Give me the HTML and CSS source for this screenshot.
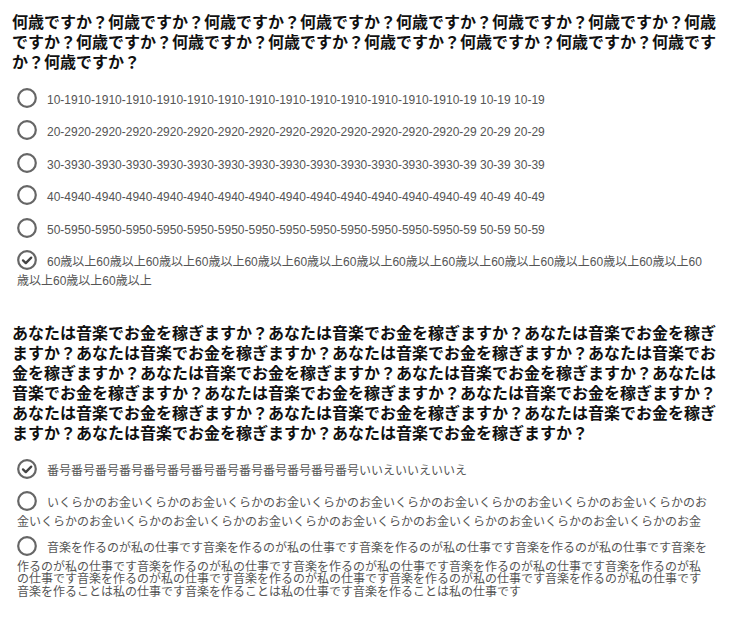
FILE: index.html
```html
<!DOCTYPE html>
<html lang="ja">
<head>
<meta charset="utf-8">
<title>アンケート</title>
<link rel="stylesheet" href="styles.css">
</head>
<body>
<div class="survey">
  <section class="question">
    <h2 class="q-title">何歳ですか？何歳ですか？何歳ですか？何歳ですか？何歳ですか？何歳ですか？何歳ですか？何歳ですか？何歳ですか？何歳ですか？何歳ですか？何歳ですか？何歳ですか？何歳ですか？何歳ですか？何歳ですか？</h2>
    <div class="options">
      <label class="option"><svg class="radio" viewBox="0 0 20 20"><circle cx="10" cy="10" r="8.8"/></svg><span class="opt-text">10-1910-1910-1910-1910-1910-1910-1910-1910-1910-1910-1910-1910-1910-19 10-19 10-19</span></label>
      <label class="option"><svg class="radio" viewBox="0 0 20 20"><circle cx="10" cy="10" r="8.8"/></svg><span class="opt-text">20-2920-2920-2920-2920-2920-2920-2920-2920-2920-2920-2920-2920-2920-29 20-29 20-29</span></label>
      <label class="option"><svg class="radio" viewBox="0 0 20 20"><circle cx="10" cy="10" r="8.8"/></svg><span class="opt-text">30-3930-3930-3930-3930-3930-3930-3930-3930-3930-3930-3930-3930-3930-39 30-39 30-39</span></label>
      <label class="option"><svg class="radio" viewBox="0 0 20 20"><circle cx="10" cy="10" r="8.8"/></svg><span class="opt-text">40-4940-4940-4940-4940-4940-4940-4940-4940-4940-4940-4940-4940-4940-49 40-49 40-49</span></label>
      <label class="option"><svg class="radio" viewBox="0 0 20 20"><circle cx="10" cy="10" r="8.8"/></svg><span class="opt-text">50-5950-5950-5950-5950-5950-5950-5950-5950-5950-5950-5950-5950-5950-59 50-59 50-59</span></label>
      <label class="option"><svg class="radio checked" viewBox="0 0 20 20"><circle cx="10" cy="10" r="8.8"/><path class="tick" d="M6 10.4 L8.8 13.1 L14.2 7.6"/></svg><span class="opt-text">60歳以上60歳以上60歳以上60歳以上60歳以上60歳以上60歳以上60歳以上60歳以上60歳以上60歳以上60歳以上60歳以上60歳以上60歳以上60歳以上</span></label>
    </div>
  </section>
  <section class="question">
    <h2 class="q-title">あなたは音楽でお金を稼ぎますか？あなたは音楽でお金を稼ぎますか？あなたは音楽でお金を稼ぎますか？あなたは音楽でお金を稼ぎますか？あなたは音楽でお金を稼ぎますか？あなたは音楽でお金を稼ぎますか？あなたは音楽でお金を稼ぎますか？あなたは音楽でお金を稼ぎますか？あなたは音楽でお金を稼ぎますか？あなたは音楽でお金を稼ぎますか？あなたは音楽でお金を稼ぎますか？あなたは音楽でお金を稼ぎますか？あなたは音楽でお金を稼ぎますか？あなたは音楽でお金を稼ぎますか？あなたは音楽でお金を稼ぎますか？あなたは音楽でお金を稼ぎますか？</h2>
    <div class="options">
      <label class="option"><svg class="radio checked" viewBox="0 0 20 20"><circle cx="10" cy="10" r="8.8"/><path class="tick" d="M6 10.4 L8.8 13.1 L14.2 7.6"/></svg><span class="opt-text">番号番号番号番号番号番号番号番号番号番号番号番号番号いいえいいえいいえ</span></label>
      <label class="option"><svg class="radio" viewBox="0 0 20 20"><circle cx="10" cy="10" r="8.8"/></svg><span class="opt-text">いくらかのお金いくらかのお金いくらかのお金いくらかのお金いくらかのお金いくらかのお金いくらかのお金いくらかのお金いくらかのお金いくらかのお金いくらかのお金いくらかのお金いくらかのお金いくらかのお金いくらかのお金いくらかのお金</span></label>
      <label class="option"><svg class="radio" viewBox="0 0 20 20"><circle cx="10" cy="10" r="8.8"/></svg><span class="opt-text">音楽を作るのが私の仕事です音楽を作るのが私の仕事です音楽を作るのが私の仕事です音楽を作るのが私の仕事です音楽を作るのが私の仕事です音楽を作るのが私の仕事です音楽を作るのが私の仕事です音楽を作るのが私の仕事です音楽を作るのが私の仕事です音楽を作るのが私の仕事です音楽を作るのが私の仕事です音楽を作るのが私の仕事です音楽を作るのが私の仕事です音楽を作ることは私の仕事です音楽を作ることは私の仕事です音楽を作ることは私の仕事です</span></label>
    </div>
  </section>
</div>
</body>
</html>
```

FILE: styles.css
```css
html, body {
  margin: 0;
  padding: 0;
  background: #ffffff;
}

.survey {
  width: 712px;
  padding: 11px 0 0 12px;
}

.question + .question {
  margin-top: 31px;
}

.q-title {
  margin: 0 0 12.5px 0;
  font-family: "Noto Sans CJK JP", "Noto Sans", sans-serif;
  font-weight: bold;
  font-size: 16px;
  line-height: 20px;
  color: #111111;
}

.options {
  width: 694px;
  padding-left: 5px;
}

.option {
  display: block;
  padding: 4px 0;
  font-family: "Liberation Sans", "Noto Sans CJK JP", sans-serif;
  font-size: 12px;
  line-height: 12.6px;
  color: #555555;
  cursor: pointer;
}

.radio {
  display: inline-block;
  width: 20px;
  height: 20px;
  margin: 0 10px 4.5px 0;
  vertical-align: -9px;
}

.radio circle {
  fill: none;
  stroke: #666666;
  stroke-width: 2.2;
}

.radio .tick {
  fill: none;
  stroke: #444444;
  stroke-width: 2.3;
  stroke-linecap: round;
  stroke-linejoin: round;
}
```
